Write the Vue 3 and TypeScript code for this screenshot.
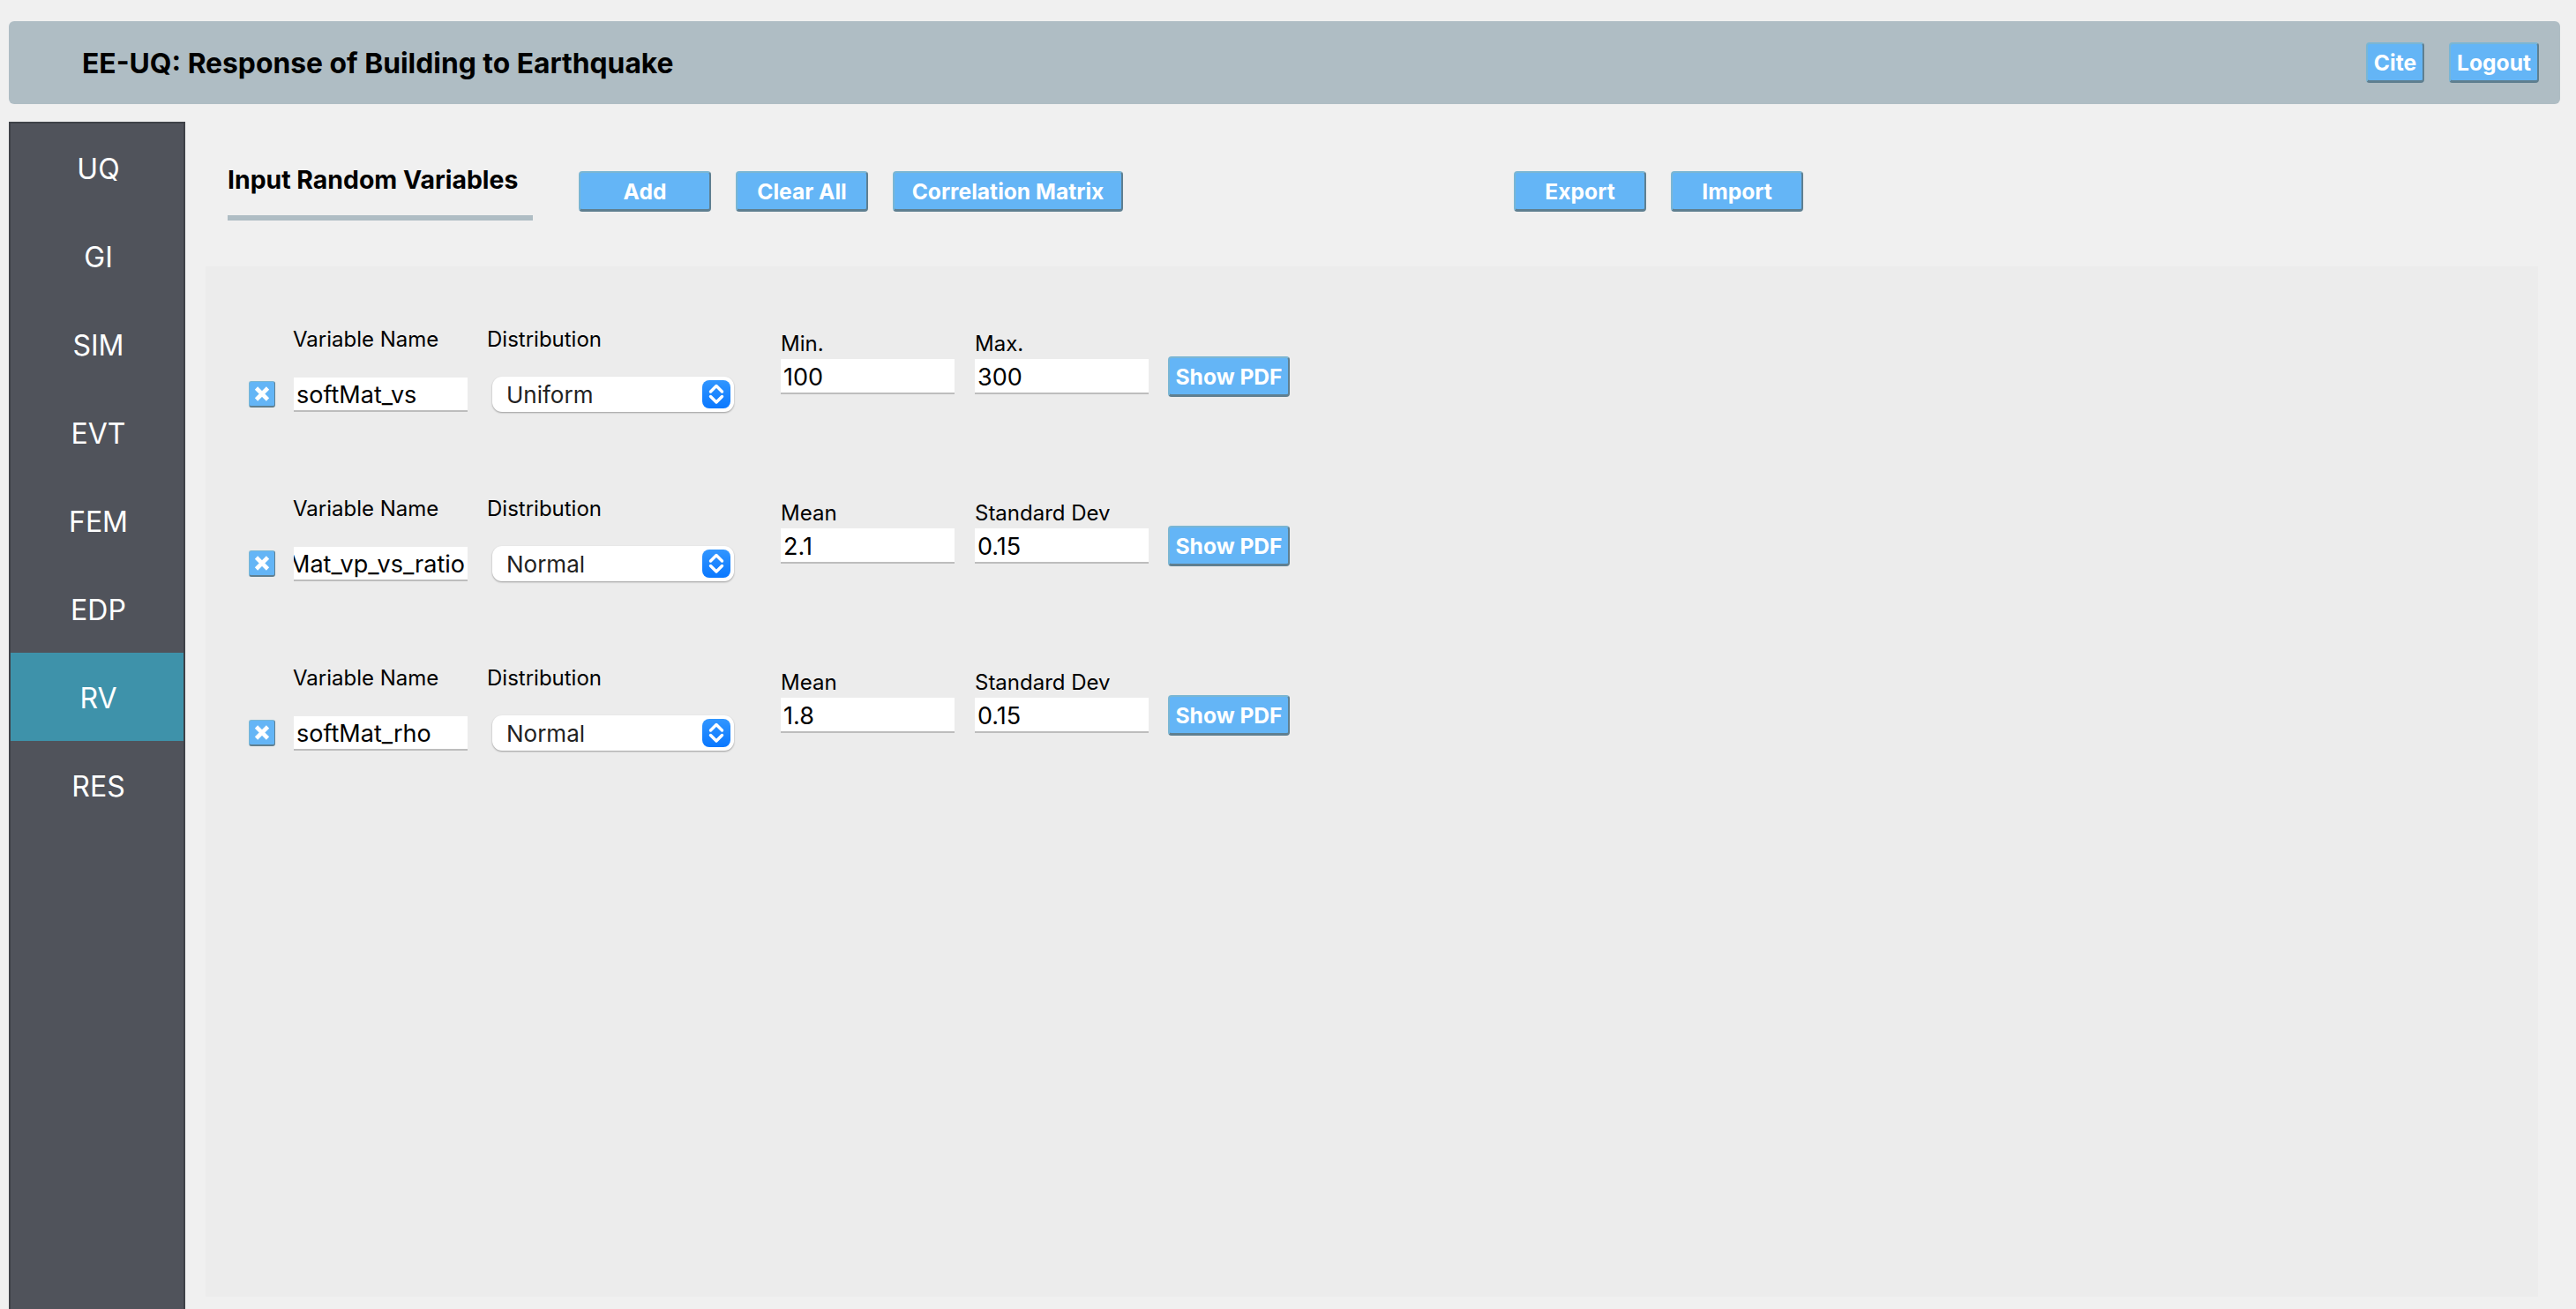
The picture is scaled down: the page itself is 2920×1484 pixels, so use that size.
<script setup lang="ts">
interface Variable {
  name: string
  distribution: string
  firstLabel: string
  firstValue: string
  secondLabel: string
  secondValue: string
}
const tabs: string[] = ['UQ', 'GI', 'SIM', 'EVT', 'FEM', 'EDP', 'RV', 'RES']
const activeTab = 'RV'
const variables: Variable[] = [
  { name: 'softMat_vs', distribution: 'Uniform', firstLabel: 'Min.', firstValue: '100', secondLabel: 'Max.', secondValue: '300' },
  { name: 'softMat_vp_vs_ratio', distribution: 'Normal', firstLabel: 'Mean', firstValue: '2.1', secondLabel: 'Standard Dev', secondValue: '0.15' },
  { name: 'softMat_rho', distribution: 'Normal', firstLabel: 'Mean', firstValue: '1.8', secondLabel: 'Standard Dev', secondValue: '0.15' }
]
</script>

<template>
  <div class="app">
    <header class="header">
      <h1 class="app-title">EE-UQ: Response of Building to Earthquake</h1>
      <div class="header-actions">
        <button class="btn btn-cite">Cite</button>
        <button class="btn btn-logout">Logout</button>
      </div>
    </header>
    <div class="body">
      <nav class="sidebar">
        <div v-for="tab in tabs" :key="tab" class="tab" :class="{ active: tab === activeTab }"><span>{{ tab }}</span></div>
      </nav>
      <main class="main">
        <div class="toolbar">
          <h2 class="section-title">Input Random Variables</h2>
          <div class="tool-buttons">
            <button class="btn tool add">Add</button>
            <button class="btn tool clear">Clear All</button>
            <button class="btn tool corr">Correlation Matrix</button>
          </div>
          <div class="tool-buttons io">
            <button class="btn tool export">Export</button>
            <button class="btn tool import">Import</button>
          </div>
        </div>
        <section class="panel">
          <div v-for="v in variables" :key="v.name" class="row">
            <span class="check">
              <svg viewBox="0 0 28 27" width="28" height="27">
                <path d="M7.5 7 L20.5 20 M20.5 7 L7.5 20" stroke="#fff" stroke-width="4.6" fill="none" />
              </svg>
            </span>
            <div class="col col-name">
              <div class="label">Variable Name</div>
              <div class="input name-input"><span>{{ v.name }}</span></div>
            </div>
            <div class="col col-dist">
              <div class="label">Distribution</div>
              <div class="select">
                <span class="select-value">{{ v.distribution }}</span>
                <span class="stepper">
                  <svg viewBox="0 0 32 32" width="32" height="32">
                    <path d="M9.5 13 L16 6.5 L22.5 13 M9.5 18.5 L16 25 L22.5 18.5" stroke="#fff" stroke-width="3.4" stroke-linecap="round" stroke-linejoin="round" fill="none" />
                  </svg>
                </span>
              </div>
            </div>
            <div class="col col-param first">
              <div class="label param-label">{{ v.firstLabel }}</div>
              <div class="input param-input"><span>{{ v.firstValue }}</span></div>
            </div>
            <div class="col col-param second">
              <div class="label param-label">{{ v.secondLabel }}</div>
              <div class="input param-input"><span>{{ v.secondValue }}</span></div>
            </div>
            <button class="btn show-pdf">Show PDF</button>
          </div>
        </section>
      </main>
    </div>
  </div>
</template>

<style>
html, body { margin: 0; background: #f0f0f0; overflow: hidden; }
</style>

<style scoped>
.app {
  box-sizing: border-box;
  width: 2920px;
  height: 1484px;
  padding: 24px 18px 0 10px;
  display: flex;
  flex-direction: column;
  gap: 20px;
  font-family: Inter, "Noto Sans", sans-serif;
  color: #000;
  overflow: hidden;
}
.header {
  flex: none;
  height: 94px;
  background: #afbdc4;
  border-radius: 6px;
  display: flex;
  align-items: center;
  justify-content: space-between;
  padding: 0 24px 0 83px;
}
.app-title {
  margin: 0;
  font-size: 31.8px;
  font-weight: 700;
}
.header-actions { display: flex; gap: 28px; }
.btn {
  box-sizing: border-box;
  background: #64b5f6;
  color: #fff;
  font-family: inherit;
  font-weight: 700;
  font-size: 24.6px;
  height: 46px;
  padding: 0;
  border-style: solid;
  border-width: 2px 2px 3px 2px;
  border-color: #7ab6d4 #5f7f90 #5f7f90 #7ab6d4;
  border-radius: 4px;
}
.btn-cite { width: 66px; }
.btn-logout { width: 102px; }
.body { flex: 1; display: flex; min-height: 0; }
.sidebar {
  box-sizing: border-box;
  flex: none;
  width: 200px;
  background: #50535b;
  border-style: solid;
  border-width: 2px 2px 0 2px;
  border-color: #3f4248;
}
.tab {
  height: 100px;
  display: flex;
  align-items: center;
  justify-content: center;
  color: #fff;
  font-size: 32px;
  font-weight: 400;
}
.tab span { padding: 2px 0 0 3px; }
.tab.active { background: #3e92aa; }
.main { flex: 1; min-width: 0; padding: 48px 25px 0 23px; }
.toolbar { display: flex; align-items: flex-start; padding-left: 25px; }
.section-title {
  box-sizing: border-box;
  margin: 0;
  width: 346px;
  height: 64px;
  line-height: 36px;
  font-size: 28.4px;
  font-weight: 700;
  white-space: nowrap;
  border-bottom: 6px solid #afbdc4;
}
.tool-buttons { display: flex; gap: 28px; margin-top: 8px; margin-left: 52px; }
.tool-buttons.io { margin-left: 443px; }
.tool.add, .tool.clear, .tool.export, .tool.import { width: 150px; }
.tool.corr { width: 261px; }
.panel {
  box-sizing: border-box;
  height: 1168px;
  margin-top: 52px;
  padding: 68px 0 0 49px;
  background: #ececec;
  display: flex;
  flex-direction: column;
  gap: 95px;
}
.row { display: flex; align-items: flex-start; height: 97px; }
.check {
  box-sizing: border-box;
  flex: none;
  width: 30px;
  height: 30px;
  margin-top: 62px;
  background: #64b5f6;
  border-style: solid;
  border-width: 1px 1px 2px 1px;
  border-color: #7ab6d4 #5f7f90 #5f7f90 #7ab6d4;
  border-radius: 3px;
  display: flex;
  align-items: center;
  justify-content: center;
}
.check svg { flex: none; display: block; }
.col { flex: none; display: flex; flex-direction: column; }
.col-name { width: 198px; margin-left: 20px; }
.col-dist { width: 280px; margin-left: 22px; }
.label { height: 30px; line-height: 30px; font-size: 24px; white-space: nowrap; }
.input {
  box-sizing: border-box;
  background: #fff;
  display: flex;
  align-items: center;
  overflow: hidden;
  white-space: nowrap;
  font-size: 27px;
  padding: 2px 3px 0;
  border-bottom: 2px solid #bdbdbd;
}
.input span { flex: none; }
.name-input { height: 39px; margin-top: 28px; margin-left: 1px; justify-content: flex-end; }
.row:not(:nth-child(2)) .name-input { justify-content: flex-start; }
.select {
  box-sizing: border-box;
  width: 274px;
  height: 40px;
  margin-top: 27px;
  margin-left: 6px;
  padding: 0 4px 0 16px;
  background: #fff;
  border-radius: 11px;
  box-shadow: 0 1px 2px rgba(0, 0, 0, 0.35);
  display: flex;
  align-items: center;
  justify-content: space-between;
  font-size: 26px;
  color: #222;
}
.select-value { padding-top: 1px; }
.stepper {
  width: 32px;
  height: 32px;
  border-radius: 8px;
  background: linear-gradient(#3196ff, #0a78ff);
  display: block;
}
.stepper svg { display: block; }
.col-param { width: 197px; padding-top: 5px; }
.col-param.first { margin-left: 53px; }
.col-param.second { margin-left: 23px; }
.param-label { height: 30px; }
.param-input { height: 40px; margin-top: 2px; }
.show-pdf { flex: none; width: 138px; margin-left: 22px; margin-top: 34px; }
</style>
